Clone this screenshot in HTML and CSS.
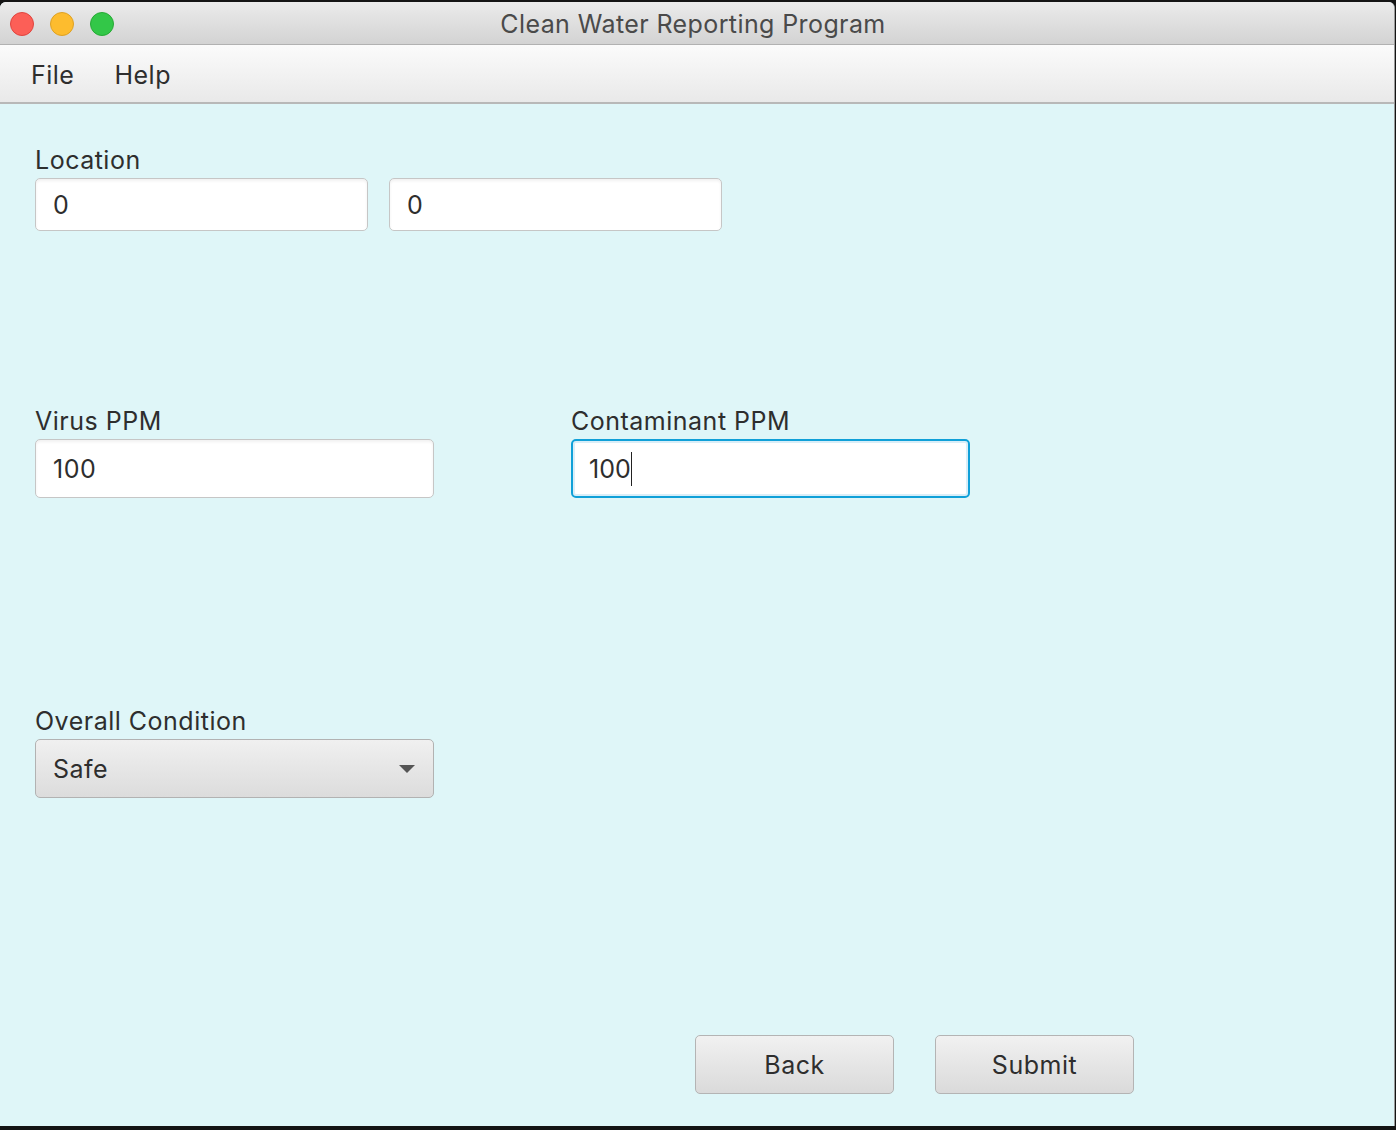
FILE: index.html
```html
<!DOCTYPE html>
<html>
<head>
<meta charset="utf-8">
<title>Clean Water Reporting Program</title>
<link rel="stylesheet" href="styles.css">
</head>
<body>
<div class="window">
  <div class="titlebar">
    <div class="lights">
      <span class="light red"></span>
      <span class="light yellow"></span>
      <span class="light green"></span>
    </div>
    <div class="title">Clean Water Reporting Program</div>
  </div>
  <div class="menubar">
    <span class="menu-item">File</span>
    <span class="menu-item">Help</span>
  </div>
  <div class="content">
    <div class="field-group">
      <div class="label">Location</div>
      <div class="row row-location">
        <div class="textfield small">0</div>
        <div class="textfield small">0</div>
      </div>
    </div>
    <div class="row row-ppm">
      <div class="field-group">
        <div class="label">Virus PPM</div>
        <div class="textfield wide">100</div>
      </div>
      <div class="field-group">
        <div class="label">Contaminant PPM</div>
        <div class="textfield wide focused"><span class="caret-text">100</span></div>
      </div>
    </div>
    <div class="field-group condition">
      <div class="label">Overall Condition</div>
      <div class="combo">
        <span>Safe</span>
        <span class="arrow"></span>
      </div>
    </div>
    <div class="buttons">
      <div class="button">Back</div>
      <div class="button">Submit</div>
    </div>
  </div>
</div>
</body>
</html>
```

FILE: styles.css
```css
html, body {
  margin: 0;
  padding: 0;
  background: #141414;
}
body {
  width: 1396px;
  height: 1130px;
  overflow: hidden;
  font-family: "Inter", "Liberation Sans", sans-serif;
  font-size: 25px;
  letter-spacing: 0.5px;
}
.window {
  margin-top: 2px;
  width: 1394px;
  height: 1124px;
  border-right: 1px solid #9a9a9a;
  background: #dff6f8;
  border-radius: 6px 6px 0 0;
  overflow: hidden;
}
.titlebar {
  position: relative;
  box-sizing: border-box;
  height: 43px;
  padding-top: 2px;
  background: linear-gradient(#ebebeb, #d3d3d3);
  border-bottom: 1px solid #b1b1b1;
  display: flex;
  align-items: center;
  justify-content: center;
}
.lights {
  position: absolute;
  left: 10px;
  top: 10px;
  display: flex;
  gap: 16px;
}
.light {
  width: 24px;
  height: 24px;
  border-radius: 50%;
  box-sizing: border-box;
}
.red { background: #fc5f57; border: 1px solid #e0443e; }
.yellow { background: #fdbc2e; border: 1px solid #dea123; }
.green { background: #33c748; border: 1px solid #27aa35; }
.title {
  color: #4a4a4a;
  margin-left: -8px;
  letter-spacing: 0.4px;
}
.menubar {
  box-sizing: border-box;
  height: 59px;
  padding-top: 3px;
  background: linear-gradient(#fbfbfb, #e9e9e9);
  border-bottom: 2px solid #b8b8b8;
  display: flex;
  align-items: center;
  padding-left: 31px;
  gap: 40px;
  color: #2e2e2e;
}
.content {
  padding: 42px 0 0 35px;
}
.label {
  line-height: 28px;
  color: #2e2e2e;
  margin-bottom: 4px;
}
.row {
  display: flex;
}
.row-location {
  gap: 21px;
}
.textfield {
  box-sizing: border-box;
  background: #fff;
  border: 1px solid #c6c6c6;
  border-radius: 5px;
  box-shadow: inset 0 2px 3px rgba(0,0,0,0.06);
  color: #2e2e2e;
  display: flex;
  align-items: center;
  padding-left: 17px;
}
.textfield.small {
  width: 333px;
  height: 53px;
}
.textfield.wide {
  width: 399px;
  height: 59px;
}
.textfield.focused {
  border: 2px solid #10a0d8;
  box-shadow: inset 0 0 0 2px #d9eef8;
  padding-left: 16px;
}
.caret-text {
  border-right: 1.5px solid #222;
  line-height: 34px;
  letter-spacing: 0;
}
.row-ppm {
  margin-top: 176px;
  gap: 137px;
}
.condition {
  margin-top: 209px;
}
.combo {
  box-sizing: border-box;
  width: 399px;
  height: 59px;
  border: 1px solid #b2b2b2;
  border-radius: 5px;
  background: linear-gradient(#f0f0f0, #dcdcdc);
  display: flex;
  align-items: center;
  justify-content: space-between;
  padding: 0 18px 0 17px;
  color: #2e2e2e;
}
.arrow {
  width: 0;
  height: 0;
  border-left: 8px solid transparent;
  border-right: 8px solid transparent;
  border-top: 8px solid #555;
}
.buttons {
  margin-top: 237px;
  margin-left: 660px;
  display: flex;
  gap: 41px;
}
.button {
  box-sizing: border-box;
  width: 199px;
  height: 59px;
  border: 1px solid #b4b4b4;
  border-radius: 5px;
  background: linear-gradient(#f1f1f1, #dadada);
  display: flex;
  align-items: center;
  justify-content: center;
  color: #2e2e2e;
}
```
